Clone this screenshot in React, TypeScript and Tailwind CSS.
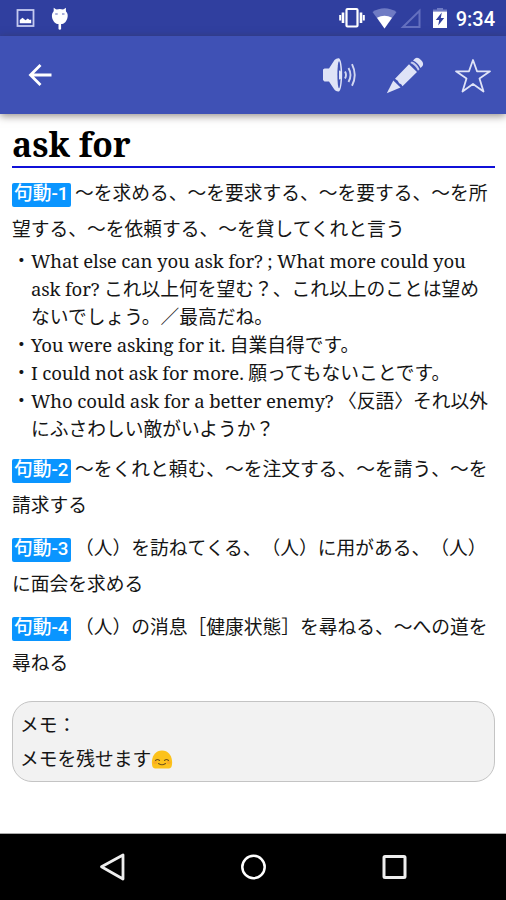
import type { ReactNode } from 'react';

type Example = { lines: ReactNode[] };

type Sense = { label: string; lines: string[]; examples?: Example[] };

const En = ({ children }: { children: ReactNode }) => (
  <span className="font-['Noto_Serif','Droid_Serif','DejaVu_Serif',serif] text-[18.6px] tracking-[-0.17px]">{children}</span>
);

const senses: Sense[] = [
  {
    label: '句動-1',
    lines: ['〜を求める、〜を要求する、〜を要する、〜を所', '望する、〜を依頼する、〜を貸してくれと言う'],
    examples: [
      {
        lines: [
          <En>What else can you ask for? ; What more could you</En>,
          <><En>ask for? </En>これ以上何を望む？、これ以上のことは望め</>,
          'ないでしょう。／最高だね。',
        ],
      },
      { lines: [<><En>You were asking for it. </En>自業自得です。</>] },
      { lines: [<><En>I could not ask for more. </En>願ってもないことです。</>] },
      {
        lines: [
          <><En>Who could ask for a better enemy? </En>〈反語〉それ以外</>,
          'にふさわしい敵がいようか？',
        ],
      },
    ],
  },
  { label: '句動-2', lines: ['〜をくれと頼む、〜を注文する、〜を請う、〜を', '請求する'] },
  { label: '句動-3', lines: ['（人）を訪ねてくる、（人）に用がある、（人）', 'に面会を求める'] },
  { label: '句動-4', lines: ['（人）の消息［健康状態］を尋ねる、〜への道を', '尋ねる'] },
];

function StatusBar() {
  return (
    <div className="flex h-9 items-start bg-[#303f9f] text-white">
      <svg className="mt-[9px] ml-4" width="19" height="18" viewBox="0 0 19 18">
        <rect x="1.5" y="1" width="16" height="16" fill="none" stroke="#c5caf0" strokeWidth="1.8" />
        <path d="M3.8 14.2V11l2.7-2.2 3 2.4 2.3-1.6 2 1.4 1.4-.4v3.6z" fill="#fff" />
      </svg>
      <svg className="mt-[6px] ml-[15px]" width="20" height="25" viewBox="0 0 20 25">
        <path d="M3.7 7V1.8L7 4zM15.9 7V1.8L12.6 4z" fill="#fff" />
        <path d="M9.800 3c4.600 0 7.900 2.800 7.900 6.800 0 3.400-2.400 8-5.700 8.200H7.600C4.300 17.800 1.900 13.200 1.900 9.800 1.900 5.800 5.200 3 9.800 3z" fill="#fff" />
        <path d="M9.800 17v5.500" stroke="#fff" strokeWidth="2.600" strokeLinecap="round" />
        <path d="M5.200 8h2.500M12 8h2.500" stroke="#8f98d0" strokeWidth="1.400" />
      </svg>
      <div className="ml-auto flex items-start">
        <svg className="mt-[7px]" width="28" height="22" viewBox="0 0 28 22">
          <rect x="8.500" y="2" width="11" height="17.500" rx="1" fill="none" stroke="#fff" strokeWidth="2.200" />
          <path d="M5 5.500v10.500M23 5.500v10.500" stroke="#fff" strokeWidth="2.600" />
          <path d="M2.200 8v5.500M25.800 8v5.500" stroke="#fff" strokeWidth="2" />
        </svg>
        <svg className="mt-[7px] ml-[6px]" width="25" height="22" viewBox="0 0 25 22">
          <path d="M.5 5Q12.500-2.500 24.500 5L12.500 21.500z" fill="#6f7bc4" />
          <path d="M5 10.800Q12.500 6.500 20 10.800L12.500 21.500z" fill="#fff" />
        </svg>
        <svg className="mt-[8px] ml-[3px]" width="22" height="21" viewBox="0 0 22 21">
          <path d="M3 19 19.500 2.800V19z" fill="none" stroke="#6470bf" strokeWidth="2" />
        </svg>
        <svg className="mt-[7px] ml-[10px]" width="16" height="22" viewBox="0 0 16 22">
          <path d="M1 4.500V2.500h4V1h6v1.500h4v2z" fill="#6f7bc4" />
          <path d="M1 4.500h14V21H1z" fill="#fff" />
          <path d="M9.800 5.500 3.800 13h3.400l-1 5.500 6-7.500H8.800z" fill="#303f9f" />
        </svg>
        <span className="mt-[6px] mr-[11px] ml-2 font-['Roboto',sans-serif] text-[20px] leading-[26px] font-medium">9:34</span>
      </div>
    </div>
  );
}

function AppBar() {
  return (
    <div className="relative flex h-[78px] items-center bg-[#3f51b5] shadow-[0_2px_8px_rgba(60,50,40,0.55)]">
      <svg className="ml-7" width="25" height="24" viewBox="0 0 25 24">
        <path d="M23.500 12H2.500M12.500 2 2.500 12l10 10" fill="none" stroke="#fff" strokeWidth="2.800" />
      </svg>
      <svg className="ml-auto" width="36" height="36" viewBox="0 0 36 36">
        <path d="M1 12.500 2.500 11.500h4.500L12.500 3Q14.500 1 17 1.300c4.300 2 4.300 31 0 33.200-2.500.3-4-1-5-2.500L7 24.500H2.500L1 23z" fill="#dfe3f7" />
        <ellipse cx="17" cy="17.800" rx="1.600" ry="13.500" fill="#3f51b5" />
        <path d="M17 13.500a2.800 4.500 0 0 1 0 9z" fill="#dfe3f7" />
        <path d="M23 14.500q2 3.500 0 7M26.500 11q4 7 0 14M30 7.200q5.500 11 0 21.500" fill="none" stroke="#d2d7f1" strokeWidth="1.900" />
      </svg>
      <svg className="ml-[28px]" width="38" height="38" viewBox="0 0 38 38">
        <path d="M.8 37.200 7.300 24.500l7.200 7z" fill="#dfe3f7" />
        <path d="M9 22.700 23 8.300l8 7.700-14.500 14.300q-1-2.300-3.300-3-.8-3-4.200-4.600z" fill="#dfe3f7" />
        <path d="M24.300 7l1.500-1.400q5 1.500 7.700 7.600L32 14.700Q29.500 9.200 24.300 7z" fill="#c5cbee" />
        <path d="M27 4.500 29 2.500q2.500-2.200 6 1.500 3.500 3.300 1.300 6.200L34.600 12Q32 6.500 27 4.500z" fill="#dfe3f7" />
      </svg>
      <svg className="mr-[14px] ml-[30px]" width="38" height="37" viewBox="0 0 38 37">
        <path d="M19 3 23 14.300h13L25.500 21.500 29.500 34.500 19 27 8.500 34.500l4-13L2 14.300h13z" fill="none" stroke="#dfe3f7" strokeWidth="1.800" strokeLinejoin="round" />
      </svg>
    </div>
  );
}

function SenseBlock({ sense }: { sense: Sense }) {
  return (
    <section className="mb-[7px]">
      {sense.lines.map((line, i) => (
        <div key={line} className="flex h-9 items-center leading-9">
          {i === 0 && (
            <span className="mt-[6px] mr-[4px] h-6 w-[59px] rounded-[2px] bg-[#0a95ff] pl-[2px] font-['Roboto','Noto_Sans_CJK_JP',sans-serif] leading-[23px] font-medium text-white">
              {sense.label}
            </span>
          )}
          <span>{line}</span>
        </div>
      ))}
      {sense.examples && (
        <ul className="pb-px">
          {sense.examples.map((example, i) => (
            <li key={i} className="flex leading-7">
              <span className="w-[19px]">・</span>
              <div>
                {example.lines.map((line, j) => (
                  <div key={j} className="h-7">{line}</div>
                ))}
              </div>
            </li>
          ))}
        </ul>
      )}
    </section>
  );
}

function BlushEmoji() {
  return (
    <svg className="inline-block align-[-3px]" width="22" height="19" viewBox="0 0 22 19">
      <path d="M11 .5c6 0 9.300 4.500 10 10 .5 4.500-.4 8-3 8H4c-2.600 0-3.500-3.500-3-8C1.700 5 5 .5 11 .5z" fill="#fcc21b" />
      <ellipse cx="4.300" cy="12.500" rx="2.200" ry="1.700" fill="#f9ac24" />
      <ellipse cx="17.700" cy="12.500" rx="2.200" ry="1.700" fill="#f9ac24" />
      <path d="M4.500 10.500q2-2 4 0M13.500 10.500q2-2 4 0M7.500 13.500q3.500 2.600 7 0" fill="none" stroke="#75551b" strokeWidth="1.100" strokeLinecap="round" />
    </svg>
  );
}

function NavBar() {
  return (
    <div className="flex h-[67px] items-center justify-center gap-[114px] border-t border-[#aaa] bg-black">
      <svg width="27" height="28" viewBox="0 0 27 28">
        <path d="M2.500 13.800 24 2v24z" fill="none" stroke="#eee" strokeWidth="2.800" strokeLinejoin="round" />
      </svg>
      <svg width="27" height="28" viewBox="0 0 27 28">
        <circle cx="13.500" cy="14" r="11.200" fill="none" stroke="#fff" strokeWidth="2.500" />
      </svg>
      <svg width="27" height="28" viewBox="0 0 27 28">
        <rect x="3" y="3.500" width="21" height="21" rx="1" fill="none" stroke="#eee" strokeWidth="3" />
      </svg>
    </div>
  );
}

export default function App() {
  return (
    <div className="flex h-[900px] w-[506px] flex-col overflow-hidden bg-white font-['Noto_Sans_CJK_JP',sans-serif] text-[18.75px] whitespace-pre text-[#151515] [text-spacing-trim:space-all]">
      <StatusBar />
      <AppBar />
      <main className="flex-1 pt-[10px] pr-[11px] pl-[12px]">
        <h1 className="mb-[6px] h-[44px] border-b-2 border-[#1010d8] font-['Noto_Serif','Droid_Serif','DejaVu_Serif',serif] text-[33.7px] leading-[40px] font-bold text-black">
          ask for
        </h1>
        {senses.map(sense => (
          <SenseBlock key={sense.label} sense={sense} />
        ))}
        <div className="mt-[21px] h-[81px] rounded-[20px] border border-[#c4c4c4] bg-[#f2f2f2] px-[7px] pt-[5px] leading-[34px]">
          <div>メモ：</div>
          <div className="h-[34px]">メモを残せます<BlushEmoji /></div>
        </div>
      </main>
      <NavBar />
    </div>
  );
}
